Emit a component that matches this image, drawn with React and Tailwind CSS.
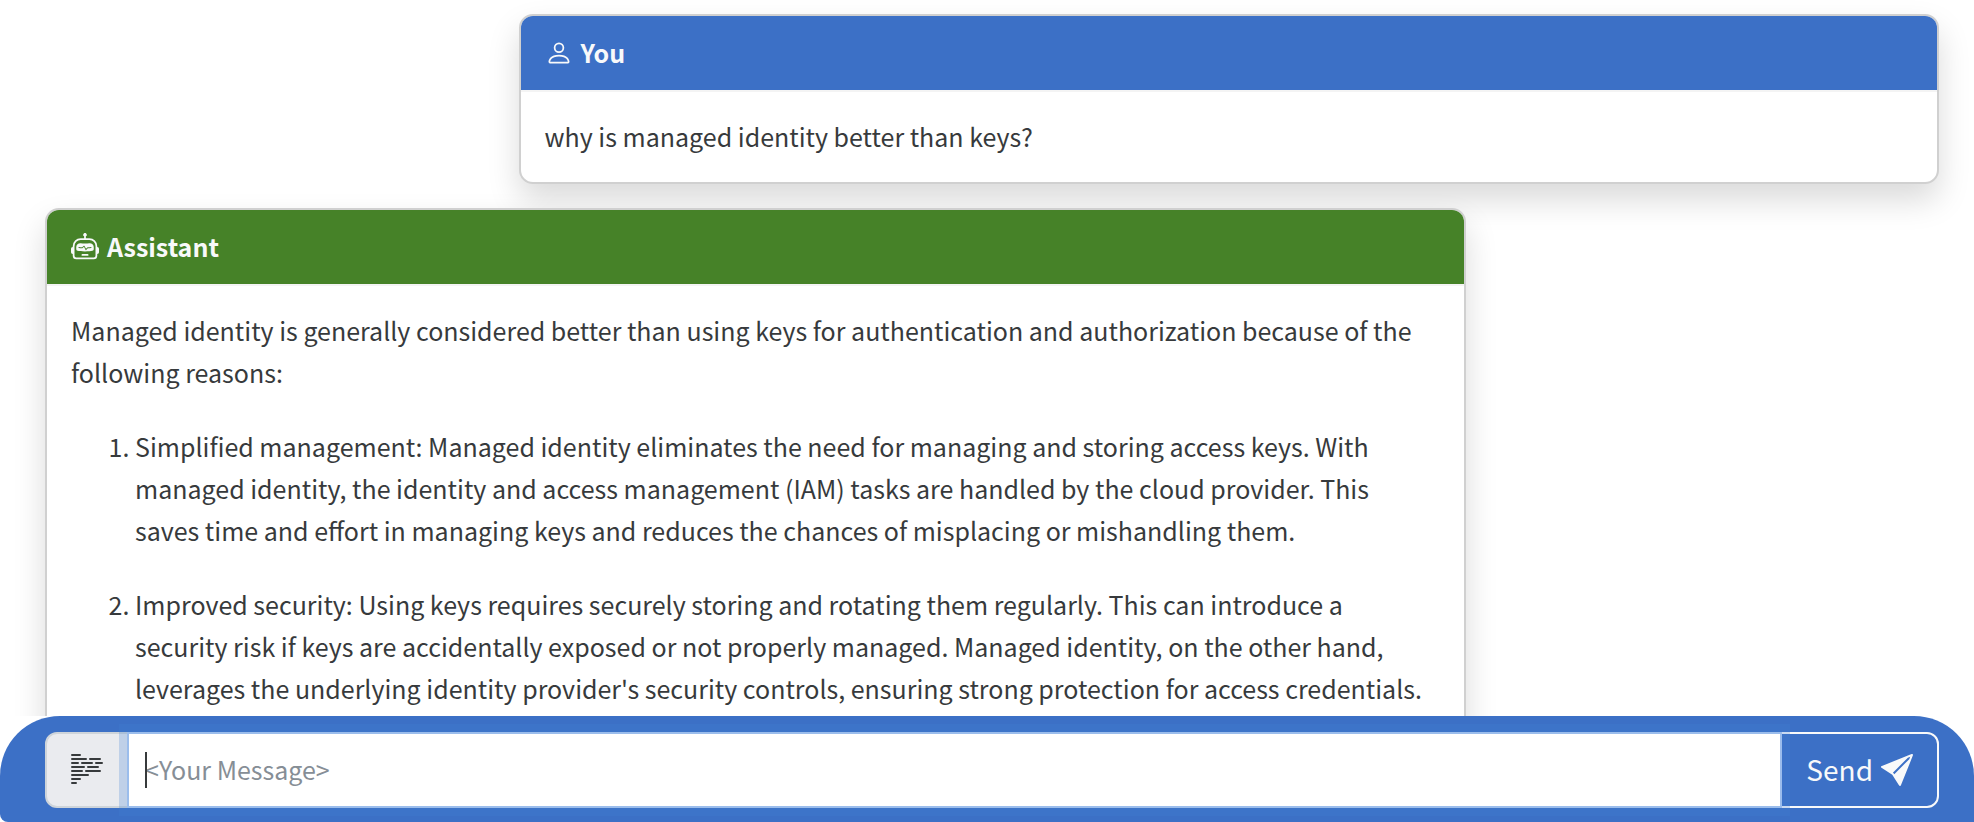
import { BsPerson, BsRobot, BsBodyText, BsSendFill } from "react-icons/bs";

function MessageCard({ icon, name, headerClass, className, children }) {
  return (
    <article
      className={`w-3/4 shrink-0 rounded-[14px] border-2 border-[#d0d0d0] bg-white bg-clip-padding shadow-[0_16px_32px_rgba(0,0,0,0.15)] ${className}`}
    >
      <header
        className={`flex items-center rounded-t-xl border-b-2 border-[#f4f4f4] bg-clip-padding px-6 py-[15px] font-bold text-[#f8f9fa] ${headerClass}`}
      >
        {icon}
        <h2 className="pb-0.5">{name}</h2>
      </header>
      <div className="pt-[23px] pr-7 pb-[25px] pl-6">{children}</div>
    </article>
  );
}

export default function App() {
  return (
    <div className="flex h-screen flex-col overflow-hidden bg-white font-['Noto_Sans_CJK_SC',sans-serif] text-[25px] leading-[42px] text-[#373a3c]">
      <main className="flex min-h-0 flex-1 flex-col gap-6 overflow-hidden pt-[14px] pr-[35px] pl-[45px]">
        <MessageCard
          name="You"
          className="self-end"
          headerClass="bg-[#3c70c6]"
          icon={<BsPerson className="mr-2 size-7" aria-hidden="true" />}
        >
          <p>why is managed identity better than keys?</p>
        </MessageCard>
        <MessageCard
          name="Assistant"
          className="self-start"
          headerClass="bg-[#468228]"
          icon={<BsRobot className="mr-2 size-7" aria-hidden="true" />}
        >
          <p className="mb-8">
            Managed identity is generally considered better than using keys for authentication and authorization because of
            the following reasons:
          </p>
          <ol className="list-decimal space-y-8 pl-16">
            <li>
              Simplified management: Managed identity eliminates the need for managing and storing access keys. With managed
              identity, the identity and access management (IAM) tasks are handled by the cloud provider. This saves time
              and effort in managing keys and reduces the chances of misplacing or mishandling them.
            </li>
            <li>
              Improved security: Using keys requires securely storing and rotating them regularly. This can introduce a
              security risk if keys are accidentally exposed or not properly managed. Managed identity, on the other hand,
              leverages the underlying identity provider's security controls, ensuring strong protection for access
              credentials.
            </li>
          </ol>
        </MessageCard>
      </main>
      <form
        className="shrink-0 rounded-t-[60px] rounded-bl-lg bg-[#3c70c6] pt-4 pr-[35px] pb-[14px] pl-[45px]"
        onSubmit={(e) => e.preventDefault()}
      >
        <div className="flex h-[76px] items-stretch">
          <button
            type="button"
            aria-label="Prompt templates"
            className="-mr-0.5 flex w-[84px] items-center justify-center rounded-l-xl border-2 border-[#ced4da] bg-[#eaebef]"
          >
            <BsBodyText className="size-8" aria-hidden="true" />
          </button>
          <div className="relative z-10 flex min-w-0 flex-1">
            <input
              type="text"
              aria-label="Your message"
              placeholder="<Your Message>"
              className="w-full min-w-0 border-2 border-[#9bbdec] bg-white px-4 pb-0.5 shadow-[0_0_0_8px_rgba(62,128,212,0.25)] outline-none placeholder:text-[#868e96]"
            />
            <span className="absolute top-5 left-[18px] h-9 w-0.5 bg-[#373a3c]" aria-hidden="true" />
          </div>
          <button
            type="submit"
            className="-ml-0.5 flex items-center gap-2 rounded-r-xl border-2 border-[#f8f9fa] px-6 text-[28px] text-[#f8f9fa]"
          >
            <span className="pb-0.5">Send</span>
            <BsSendFill className="size-8" aria-hidden="true" />
          </button>
        </div>
      </form>
    </div>
  );
}
